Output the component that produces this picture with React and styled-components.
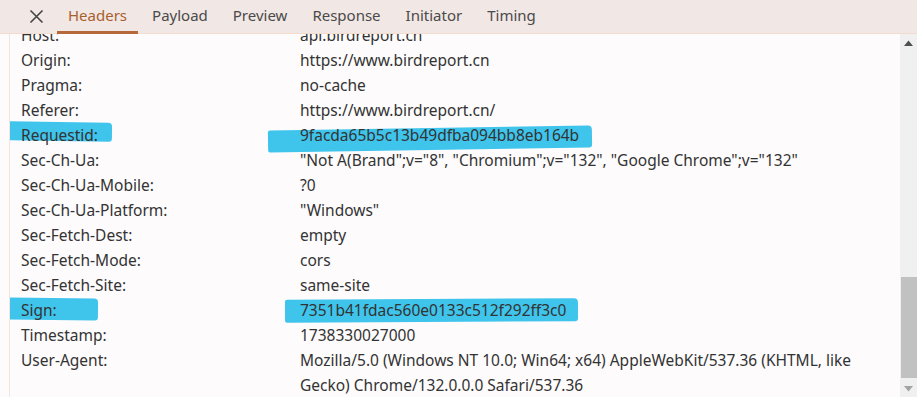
import React from 'react';
import styled, { createGlobalStyle } from 'styled-components';

const GlobalStyle = createGlobalStyle`
  html, body { margin: 0; padding: 0; background: #fdfbfc; }
  body { font-family: "Noto Sans", "Open Sans", sans-serif; }
`;

const Panel = styled.div`
  width: 917px;
  height: 397px;
  display: flex;
  flex-direction: column;
  overflow: hidden;
  background: #fdfbfc;
`;

const TabBar = styled.div`
  height: 33px;
  flex: none;
  display: flex;
  align-items: stretch;
  background: #f1e7e4;
  border-bottom: 1px solid #f4dccd;
  padding-left: 23px;
`;

const Close = styled.div`
  width: 26px;
  display: flex;
  align-items: center;
  justify-content: center;
  margin-right: 8px;
  padding-bottom: 1px;
  color: #444;
`;

const Tab = styled.div`
  display: flex;
  align-items: center;
  padding: 0 11px 2px;
  margin-right: 3px;
  margin-bottom: -1px;
  font-size: 15px;
  color: ${p => (p.$active ? '#a85f2f' : '#4a4a4a')};
  border-bottom: 3px solid ${p => (p.$active ? '#b5683a' : 'transparent')};
`;

const Body = styled.div`
  flex: 1;
  display: flex;
  min-height: 0;
`;

const Content = styled.div`
  flex: 1;
  overflow: hidden;
  border-left: 1px solid #f3e4df;
  margin-left: 9px;
`;

const List = styled.div`
  margin-top: -11px;
`;

const Row = styled.div`
  position: relative;
  display: grid;
  grid-template-columns: 279px 1fr;
  padding-left: 11px;
  padding-right: 40px;
  font-size: 15.5px;
  line-height: 25px;
  color: #333;
`;

const Name = styled.div`
  position: relative;
  z-index: 1;
`;

const Value = styled.div`
  position: relative;
  z-index: 1;
`;

const Mark = styled.span`
  position: absolute;
  z-index: 0;
  left: ${p => p.$left}px;
  top: ${p => p.$top}px;
  width: ${p => p.$width}px;
  height: ${p => p.$height}px;
  background: #3fc4ec;
  transform: rotate(${p => p.$rotate || 0}deg);
  border-radius: 2px 4px 3px 2px;
`;

const Scrollbar = styled.div`
  width: 17px;
  flex: none;
  background: #f0f0f0;
  display: flex;
  flex-direction: column;
  align-items: center;
`;

const Arrow = styled.div`
  height: 17px;
  width: 17px;
  display: flex;
  align-items: center;
  justify-content: center;
  color: ${p => (p.$dim ? '#a3a3a3' : '#505050')};
`;

const Track = styled.div`
  flex: 1;
  width: 100%;
  display: flex;
  flex-direction: column;
  justify-content: flex-end;
  padding-bottom: 2px;
`;

const Thumb = styled.div`
  height: 101px;
  margin: 0 0 0 1px;
  background: #c1c1c1;
`;

const headers = [
  ['Host:', 'api.birdreport.cn'],
  ['Origin:', 'https://www.birdreport.cn'],
  ['Pragma:', 'no-cache'],
  ['Referer:', 'https://www.birdreport.cn/'],
  ['Requestid:', '9facda65b5c13b49dfba094bb8eb164b', {
    name: { left: -4, top: -1, width: 106, height: 19, rotate: 0.8 },
    value: { left: 258, top: 5, width: 324, height: 22, rotate: -0.9 },
  }],
  ['Sec-Ch-Ua:', '"Not A(Brand";v="8", "Chromium";v="132", "Google Chrome";v="132"'],
  ['Sec-Ch-Ua-Mobile:', '?0'],
  ['Sec-Ch-Ua-Platform:', '"Windows"'],
  ['Sec-Fetch-Dest:', 'empty'],
  ['Sec-Fetch-Mode:', 'cors'],
  ['Sec-Fetch-Site:', 'same-site'],
  ['Sign:', '7351b41fdac560e0133c512f292ff3c0', {
    name: { left: -4, top: 0, width: 92, height: 22, rotate: 0.6 },
    value: { left: 275, top: 1, width: 293, height: 23, rotate: -0.3 },
  }],
  ['Timestamp:', '1738330027000'],
  ['User-Agent:', 'Mozilla/5.0 (Windows NT 10.0; Win64; x64) AppleWebKit/537.36 (KHTML, like Gecko) Chrome/132.0.0.0 Safari/537.36'],
];

const tabs = ['Headers', 'Payload', 'Preview', 'Response', 'Initiator', 'Timing'];

const App = () => (
  <Panel>
    <GlobalStyle />
    <TabBar>
      <Close>
        <svg width="15" height="15" viewBox="0 0 15 15">
          <path d="M1.5 1.5 L13.5 13.5 M13.5 1.5 L1.5 13.5" stroke="currentColor" strokeWidth="1.6" />
        </svg>
      </Close>
      {tabs.map((t, i) => (
        <Tab key={t} $active={i === 0}>{t}</Tab>
      ))}
    </TabBar>
    <Body>
      <Content>
        <List>
          {headers.map(([name, value, marks]) => (
            <Row key={name}>
              {marks && <Mark $left={marks.name.left} $top={marks.name.top} $width={marks.name.width} $height={marks.name.height} $rotate={marks.name.rotate} />}
              {marks && <Mark $left={marks.value.left} $top={marks.value.top} $width={marks.value.width} $height={marks.value.height} $rotate={marks.value.rotate} />}
              <Name>{name}</Name>
              <Value>{value}</Value>
            </Row>
          ))}
        </List>
      </Content>
      <Scrollbar>
        <Arrow>
          <svg width="9" height="6" viewBox="0 0 9 6"><path d="M0 6 L4.5 0.5 L9 6 Z" fill="currentColor" /></svg>
        </Arrow>
        <Track>
          <Thumb />
        </Track>
        <Arrow $dim>
          <svg width="9" height="6" viewBox="0 0 9 6"><path d="M0 0 L4.5 5.5 L9 0 Z" fill="currentColor" /></svg>
        </Arrow>
      </Scrollbar>
    </Body>
  </Panel>
);

export default App;
